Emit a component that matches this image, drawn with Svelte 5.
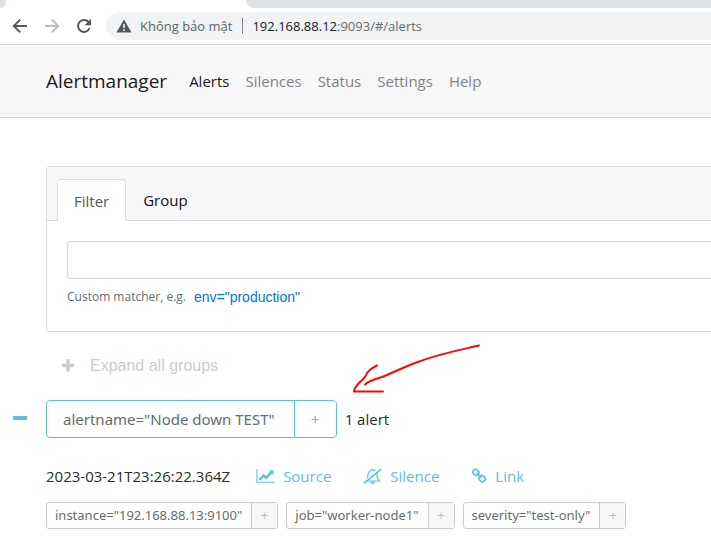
<script>
  const navItems = ['Alerts', 'Silences', 'Status', 'Settings', 'Help'];
  const labels = ['instance="192.168.88.13:9100"', 'job="worker-node1"', 'severity="test-only"'];
  let active = $state('Alerts');
  let matcher = $state('');
</script>

<div class="window">
  <div class="tabstrip"><span class="left"></span><span class="right"></span></div>
  <div class="toolbar">
    <button class="tool" aria-label="Back">
      <svg width="16" height="16" viewBox="0 0 16 16"><path d="M15 8H2M8.2 1.6 1.8 8l6.4 6.4" fill="none" stroke="#55595e" stroke-width="2" /></svg>
    </button>
    <button class="tool" aria-label="Forward">
      <svg width="16" height="16" viewBox="0 0 16 16"><path d="M1 8h13M7.8 1.6 14.2 8l-6.4 6.4" fill="none" stroke="#babcbe" stroke-width="2" /></svg>
    </button>
    <button class="tool" aria-label="Reload">
      <svg width="16" height="16" viewBox="0 0 16 16"><path d="M13.6 10.2A6 6 0 1 1 12.4 3.8L13.5 5" fill="none" stroke="#55595e" stroke-width="2" /><path d="M15 .8v6.4H8.6z" fill="#55595e" /></svg>
    </button>
    <div class="omnibox">
      <svg width="16" height="14" viewBox="0 0 16 14"><path d="M8 0.5 15.6 13.5H.4z" fill="#55595e" /><path d="M8 5v4M8 10.2v1.8" stroke="#f1f3f4" stroke-width="1.6" /></svg>
      <span class="insecure">Không bảo mật</span>
      <span class="url">192.168.88.12<span>:9093/#/alerts</span></span>
    </div>
  </div>

  <nav>
    <a class="brand" href="#/alerts">Alertmanager</a>
    {#each navItems as item}
      <a class:active={active === item} href={'#/' + item.toLowerCase()} onclick={() => (active = item)}>{item}</a>
    {/each}
  </nav>

  <main>
    <section class="card">
      <div class="tabs">
        <button class="tab selected">Filter</button>
        <button class="tab">Group</button>
      </div>
      <div class="body">
        <input type="text" aria-label="Custom matcher" bind:value={matcher} />
        <div class="hint">
          <span>Custom matcher, e.g.</span>
          <button onclick={() => (matcher = 'env="production"')}>env="production"</button>
        </div>
      </div>
    </section>

    <button class="expand">
      <svg width="16" height="16" viewBox="0 0 1792 1792" fill="currentColor"><path d="M1600 736v192q0 40-28 68t-68 28h-416v416q0 40-28 68t-68 28h-192q-40 0-68-28t-28-68v-416h-416q-40 0-68-28t-28-68v-192q0-40 28-68t68-28h416v-416q0-40 28-68t68-28h192q40 0 68 28t28 68v416h416q40 0 68 28t28 68z" /></svg>
      Expand all groups
    </button>

    <div class="group">
      <button class="collapse" aria-label="Collapse group"><span></span></button>
      <div class="chip large">
        <span>alertname="Node down TEST"</span><button aria-label="Filter by alertname">+</button>
      </div>
      <span class="count">1 alert</span>
      <svg class="pointer" width="134" height="54" viewBox="0 0 134 54" fill="none" stroke="#fa0808" stroke-width="2" stroke-linecap="round" stroke-linejoin="round">
        <path d="M129 4.500C110 9 88 13 65 22C47 29 40 33 32 36Q18 40 15 43.500" />
        <path d="M27 24.500Q21 27 17 32Q16 36 10 41Q4 47 4 50.500H33" />
      </svg>
    </div>

    <div class="actions">
      <time>2023-03-21T23:26:22.364Z</time>
      <a href="#/source">
        <svg width="19" height="16" viewBox="0 0 2048 1792" fill="currentColor"><path d="M2048 1536v128h-2048v-1536h128v1408h1920zm-128-1248v435q0 21-19.500 29.500t-35.500-7.500l-121-121-633 633q-10 10-23 10t-23-10l-233-233-416 416-192-192 585-585q10-10 23-10t23 10l233 233 464-464-121-121q-16-16-7.500-35.500t29.500-19.500h435q14 0 23 9t9 23z" /></svg>
        Source
      </a>
      <a href="#/silences/new">
        <svg width="19" height="16" viewBox="0 0 19 16" fill="none" stroke="currentColor" stroke-width="1.200"><path d="M2.500 13C5 10.800 5 8.500 5 6.500a4.500 4.500 0 0 1 9 0c0 2 0 4.300 2.500 6.500z" /><path d="M9.500 2V.6" /><path d="M8 13.600a1.500 1.500 0 0 0 3 0" stroke-width="1.600" /><path d="M.2 14.200 17.600 0" stroke="#fff" stroke-width="1.200" /><path d="M.8 15.300 18.200 1.100" stroke-width="1.500" /></svg>
        Silence
      </a>
      <a href="#/alerts/link">
        <svg width="16" height="16" viewBox="0 0 1792 1792" fill="currentColor"><path d="M1520 1216q0-40-28-68l-208-208q-28-28-68-28-42 0-72 32 3 3 19 18.500t21.500 21.500 15 19 13 25.500 3.500 27.500q0 40-28 68t-68 28q-15 0-27.500-3.500t-25.500-13-19-15-21.500-21.500-18.500-19q-33 31-33 73 0 40 28 68l206 207q27 27 68 27 40 0 68-26l147-146q28-28 28-67zm-703-705q0-40-28-68l-206-207q-28-28-68-28-39 0-68 27l-147 146q-28 28-28 67 0 40 28 68l208 208q27 27 68 27 42 0 72-31-3-3-19-18.500t-21.500-21.500-15-19-13-25.500-3.500-27.500q0-40 28-68t68-28q15 0 27.500 3.500t25.500 13 19 15 21.500 21.500 18.500 19q33-31 33-73zm895 705q0 120-85 203l-147 146q-83 83-203 83-121 0-204-85l-206-207q-83-83-83-203 0-123 88-209l-88-88q-86 88-208 88-120 0-204-84l-208-208q-84-84-84-204t85-203l147-146q83-83 203-83 121 0 204 85l206 207q83 83 83 203 0 123-88 209l88 88q86-88 208-88 120 0 204 84l208 208q84 84 84 204z" /></svg>
        Link
      </a>
    </div>

    <div class="labels">
      {#each labels as label}
        <div class="chip">
          <span>{label}</span><button aria-label={'Filter by ' + label}>+</button>
        </div>
      {/each}
    </div>
  </main>
</div>

<style>
  :global(body) { background: #fff; }
  .window {
    font-family: 'Open Sans', 'Noto Sans', sans-serif;
    font-size: 15px;
    line-height: 24px;
    color: #292b2c;
    overflow: hidden;
    white-space: nowrap;
  }
  button { font: inherit; color: inherit; background: none; border: 0; padding: 0; margin: 0; cursor: pointer; }
  a { text-decoration: none; }
  svg { display: block; flex: none; }

  .tabstrip { display: flex; justify-content: space-between; height: 8px; gap: 240px; }
  .tabstrip span { background: #dee1e6; }
  .left { width: 6px; border-bottom-right-radius: 8px; }
  .right { flex: 1; border-bottom-left-radius: 8px; }

  .toolbar { display: flex; align-items: center; height: 36px; padding-left: 12px; gap: 16px; border-bottom: 1px solid #d9dbdd; }
  .tool { display: flex; }
  .omnibox {
    flex: 1; display: flex; align-items: center; height: 28px;
    margin-left: -2px; padding-left: 10px; gap: 8px;
    background: #f1f3f4; border-radius: 14px 0 0 14px; font-size: 13px; line-height: 16px;
  }
  .insecure { color: #5f6368; padding-right: 10px; border-right: 1px solid #85888c; }
  .url { color: #202124; padding-left: 1px; }
  .url span { color: #6a6d70; }

  nav { display: flex; align-items: center; height: 72px; padding-left: 46px; gap: 16px; background: #f7f7f7; border-bottom: 1px solid #d6d6d6; }
  nav a { color: #828282; }
  nav a.active { color: #1a1a1a; }
  nav .brand { font-size: 19px; color: #1a1a1a; margin-right: 6px; }

  main { padding: 48px 0 16px 46px; }
  .card { border: 1px solid #dcdddd; border-right: 0; border-radius: 4px 0 0 4px; }
  .tabs { display: flex; padding: 12px 0 0 10px; background: #f7f7f9; border-bottom: 1px solid #d9dadb; }
  .tab { height: 41px; padding: 0 16px; border: 1px solid transparent; border-bottom: 0; color: #111; }
  .tab.selected { margin-bottom: -1px; height: 42px; background: #fff; border-color: #ddd; border-radius: 4px 4px 0 0; color: #55595c; }
  .body { padding: 20px 0 20px 20px; }
  input { display: block; box-sizing: border-box; width: 100%; height: 38px; padding: 8px 12px; border: 1px solid #d6d7d8; border-right: 0; border-radius: 4px 0 0 4px; outline: 0; font: inherit; }
  .hint { display: flex; align-items: center; gap: 8px; height: 28px; margin-top: 4px; font-size: 12px; color: #636c72; }
  .hint button { font-family: 'Liberation Sans', Arial, sans-serif; font-size: 14px; color: #0275d8; }

  .expand { display: flex; align-items: center; gap: 14px; margin: 22px 0 0 14px; font-family: 'Liberation Sans', Arial, sans-serif; font-size: 16px; color: #ccc; }

  .group { position: relative; display: flex; align-items: center; margin: 22px 0 0 -33px; }
  .collapse { display: flex; align-items: center; width: 33px; height: 26px; margin-bottom: 2px; }
  .collapse span { width: 14px; height: 4px; border-radius: 1px; background: #5bc0de; }
  .pointer { position: absolute; left: 337px; top: -59px; }
  .count { margin-left: 8px; }

  .chip { display: flex; border: 1px solid #ccc; border-radius: 3px; color: #636c72; font-family: 'Noto Sans', 'Open Sans', sans-serif; font-size: 13px; line-height: 25px; }
  .chip span { padding: 0 9px 0 8px; }
  .chip button { width: 26px; border-left: 1px solid #ccc; background: #f7f7f7; color: #bbb; }
  .chip.large { border-color: #5bc0de; border-radius: 4px; font-size: 15px; line-height: 36px; }
  .chip.large span { padding: 0 19px 0 16px; }
  .chip.large button { width: 42px; border-color: #5bc0de; border-radius: 0 3px 3px 0; background: #fff; color: #5bc0de; }

  .actions { display: flex; align-items: center; gap: 24px; margin-top: 26px; }
  .actions time { margin-right: 2px; }
  .actions a { display: flex; align-items: center; gap: 8px; margin-right: 8px; color: #5bc0de; }
  .labels { display: flex; gap: 8px; margin-top: 14px; }
</style>
